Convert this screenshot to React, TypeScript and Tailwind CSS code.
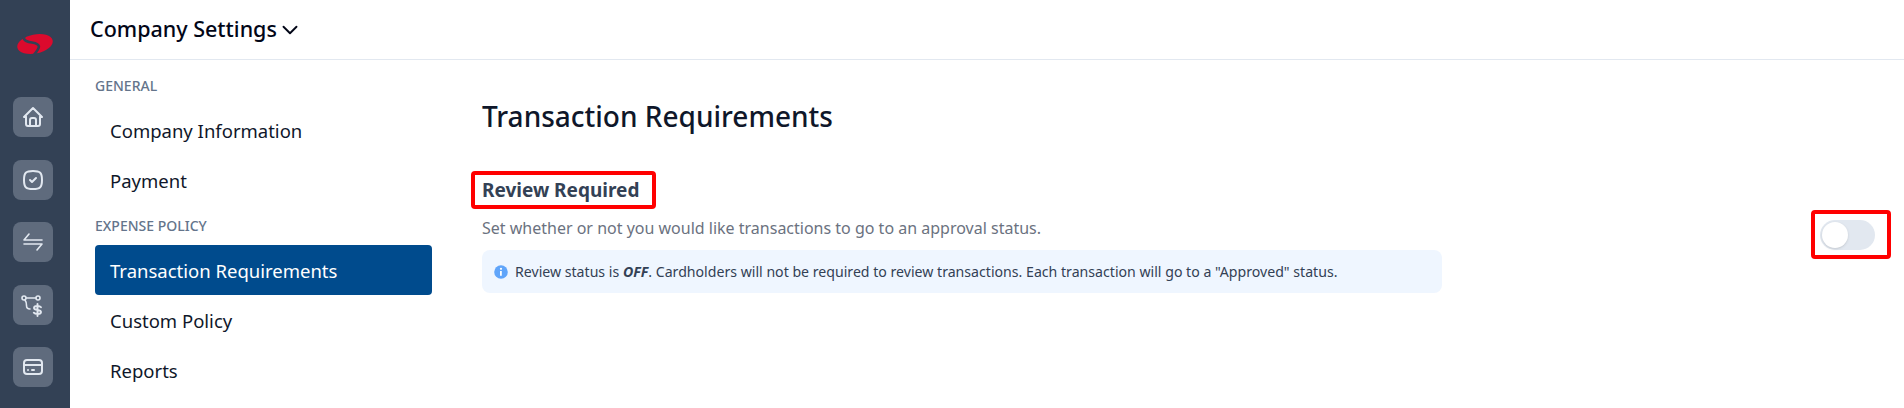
import { ChevronDown } from 'lucide-react'
import { TbCreditCard, TbHome, TbSquareRoundedCheck } from 'react-icons/tb'

const railIcon = 'w-6 h-6'

const TransferIcon = () => (
  <svg viewBox="0 0 24 24" className={railIcon} fill="none" stroke="currentColor" strokeWidth="1.6" strokeLinecap="round" strokeLinejoin="round">
    <path d="M3 10h18M3 10l5-6M21 14H3M21 14l-5 6" />
  </svg>
)

const RouteDollarIcon = () => (
  <svg viewBox="0 0 24 24" className={railIcon} fill="none" stroke="currentColor" strokeWidth="1.6" strokeLinecap="round" strokeLinejoin="round">
    <circle cx="3" cy="5" r="2" />
    <circle cx="17" cy="5" r="2" />
    <path d="M5 5h10M4 7c1.500 2 1.500 3.500 1.500 5.500 0 2 1 3.500 3.500 3.500" />
    <path strokeWidth="1.900" d="M20 14.300c-.6-.9-1.700-1.300-3.800-1.300-1.900 0-3.200.8-3.200 2 0 3 7 1 7 4 0 1.200-1.300 2-3.300 2-1.900 0-3.200-.4-3.900-1.300M16.500 11v12" />
  </svg>
)

const Logo = () => (
  <svg viewBox="0 0 36 24" className="w-[36px] h-[24px]">
    <ellipse cx="18" cy="12" rx="18" ry="9.500" transform="rotate(-12 18 12)" fill="#dc0a2d" />
    <path d="M12 0C4 6 6 9 15 10.500 24 12 24 15 16 24" fill="none" stroke="#334155" strokeWidth="2.600" />
  </svg>
)

const InfoDot = () => (
  <svg viewBox="0 0 14 14" className="w-[14px] h-[14px] shrink-0">
    <circle cx="7" cy="7" r="6.800" fill="#60a5fa" />
    <circle cx="7" cy="3.800" r="1.100" fill="#fff" />
    <path d="M6 6h1.800v4.800H6z" fill="#fff" />
  </svg>
)

const RailButton = ({ children }: { children: React.ReactNode }) => (
  <div className="w-10 h-10 rounded-lg bg-[#5f6b7d] flex items-center justify-center text-[#e2e8f0]">
    {children}
  </div>
)

const NavItem = ({ label, active }: { label: string; active?: boolean }) => (
  <div
    className={
      active
        ? 'h-[50px] px-[15px] pt-px rounded bg-[#004b8d] text-white flex items-center text-[18.500px]'
        : 'h-[50px] px-[15px] pt-px rounded text-[#0f172a] flex items-center text-[18.500px]'
    }
  >
    {label}
  </div>
)

const NavLabel = ({ label }: { label: string }) => (
  <div className="h-[39.500px] flex items-center text-[14px] font-medium text-[#64748b]">{label}</div>
)

export default function App() {
  return (
    <div className="w-[1904px] h-[408px] overflow-hidden flex bg-white font-['Noto_Sans',sans-serif]">
      <aside className="w-[70px] shrink-0 bg-[#334155] pr-[4px] flex flex-col items-center">
        <div className="h-[97px] pb-[9px] ml-[4px] flex items-center justify-center">
          <Logo />
        </div>
        <div className="flex flex-col gap-[22.500px]">
          <RailButton><TbHome className={railIcon} /></RailButton>
          <RailButton><TbSquareRoundedCheck className={railIcon} /></RailButton>
          <RailButton><TransferIcon /></RailButton>
          <RailButton><RouteDollarIcon /></RailButton>
          <RailButton><TbCreditCard className={railIcon} /></RailButton>
        </div>
      </aside>

      <div className="flex-1 flex flex-col min-w-0">
        <header className="h-[60px] shrink-0 border-b border-[#e2e8f0] pl-[20px] flex items-center">
          <span className="text-[21.500px] font-medium text-[#020617]">Company Settings</span>
          <ChevronDown className="w-[26px] h-[26px] text-[#020617]" strokeWidth={1.75} />
        </header>

        <div className="flex-1 flex">
          <nav className="w-[337px] ml-[25px] shrink-0 pt-[6px]">
            <NavLabel label="GENERAL" />
            <NavItem label="Company Information" />
            <NavItem label="Payment" />
            <NavLabel label="EXPENSE POLICY" />
            <NavItem label="Transaction Requirements" active />
            <NavItem label="Custom Policy" />
            <NavItem label="Reports" />
          </nav>

          <main className="flex-1 pl-[50px] pr-[29px] pt-[34px]">
            <h1 className="text-[28px] leading-[44px] font-medium text-[#0f172a]">Transaction Requirements</h1>
            <div className="mt-[38px] flex items-start justify-between">
              <div className="w-[960px]">
                <div className="relative w-fit">
                  <h2 className="text-[19px] leading-[28px] font-bold text-[#334155]">Review Required</h2>
                  <div className="absolute -left-[11px] -right-[17px] -top-[5px] -bottom-[5px] border-4 border-[#ff0000] rounded-sm" />
                </div>
                <p className="mt-[12px] text-[16px] leading-[24px] text-[#6b7280]">
                  Set whether or not you would like transactions to go to an approval status.
                </p>
                <div className="mt-[10px] h-[43px] rounded-lg bg-[#eff6ff] px-3 flex items-center gap-[7px] text-[14.130px] text-[#334155]">
                  <InfoDot />
                  <span>
                    Review status is <b className="italic font-bold">OFF</b>. Cardholders will not be required to review transactions. Each transaction will go to a "Approved" status.
                  </span>
                </div>
              </div>
              <div className="relative mt-[44px]">
                <div className="w-[55px] h-[30px] rounded-full bg-[#e2e8f0] flex items-center pl-[2px]">
                  <div className="w-[26px] h-[26px] rounded-full bg-white shadow" />
                </div>
                <div className="absolute -left-[9px] -right-[16px] -top-[10px] -bottom-[9px] border-4 border-[#ff0000] rounded-sm" />
              </div>
            </div>
          </main>
        </div>
      </div>
    </div>
  )
}
